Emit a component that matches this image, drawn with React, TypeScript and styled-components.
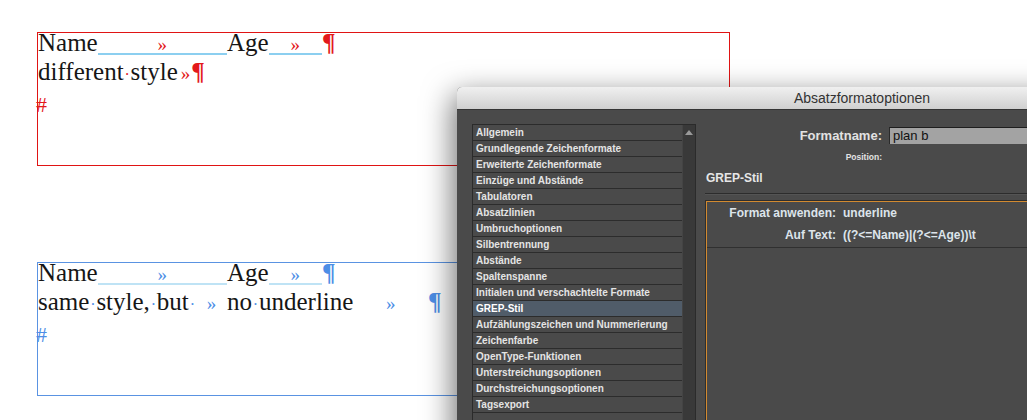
import React from "react";
import styled, { createGlobalStyle } from "styled-components";

const RED = "#e3191b";
const BLUE = "#4d8ee6";

const GlobalStyle = createGlobalStyle`
  html, body {
    margin: 0;
    padding: 0;
    background: #fff;
  }
  body {
    width: 1027px;
    height: 420px;
    overflow: hidden;
  }
`;

const Canvas = styled.main`
  position: relative;
  width: 1027px;
  height: 420px;
  overflow: hidden;
  box-sizing: border-box;
  padding: 32px 0 0 37px;
  display: flex;
  flex-direction: column;
  gap: 96px;
`;

const Frame = styled.section<{ $border: string }>`
  width: 693px;
  height: 134px;
  flex: none;
  box-sizing: border-box;
  border: 1px solid ${(p) => p.$border};
  font-family: "Liberation Serif", "Times New Roman", serif;
  font-size: 25px;
  color: #161616;
`;

const Story = styled.div`
  margin-top: -5px;
`;

const Line = styled.div`
  height: 29px;
  line-height: 29px;
  white-space: nowrap;
`;

const Field = styled.span<{ $w: number }>`
  display: inline-flex;
  align-items: baseline;
  width: ${(p) => p.$w}px;
`;

const TabFill = styled.span<{ $c: string; $line?: string }>`
  flex: 1;
  display: inline-flex;
  justify-content: center;
  font-size: 19px;
  line-height: 17px;
  color: ${(p) => p.$c};
  border-bottom: 2px solid ${(p) => p.$line ?? "transparent"};
`;

const Dot = styled.span<{ $c: string }>`
  display: inline-block;
  width: 7px;
  text-align: center;
  font-size: 16px;
  color: ${(p) => p.$c};
`;

const Raquo = styled.span<{ $c: string }>`
  margin: 0 1px 0 3px;
  font-size: 19px;
  color: ${(p) => p.$c};
`;

const Pilcrow = styled.span<{ $c: string }>`
  font-weight: 700;
  color: ${(p) => p.$c};
`;

const Hash = styled.span<{ $c: string }>`
  position: relative;
  top: 3px;
  margin-left: -2px;
  font-size: 22px;
  color: ${(p) => p.$c};
`;

/* dialog */

const Dialog = styled.div`
  position: absolute;
  left: 457px;
  top: 87px;
  width: 810px;
  height: 420px;
  display: flex;
  flex-direction: column;
  border-radius: 5px 5px 0 0;
  background: #4a4a4a;
  box-shadow: -4px 8px 30px rgba(0, 0, 0, 0.55);
  font-family: "Liberation Sans", Arial, sans-serif;
`;

const TitleBar = styled.header`
  height: 23px;
  flex: none;
  box-sizing: border-box;
  display: flex;
  align-items: center;
  justify-content: center;
  border-radius: 5px 5px 0 0;
  border-bottom: 1px solid #353535;
  background: linear-gradient(#f0f0f0, #d0d0d0);
  color: #333;
  font-size: 14px;
`;

const Body = styled.div`
  flex: 1;
  display: flex;
  padding: 14px 0 0 15px;
`;

const List = styled.div`
  width: 224px;
  height: 320px;
  flex: none;
  box-sizing: border-box;
  display: flex;
  border: 1px solid #2b2b2b;
`;

const Rows = styled.ul`
  flex: 1;
  margin: 0;
  padding: 0;
  list-style: none;
`;

const Row = styled.li<{ $selected?: boolean }>`
  height: 16px;
  box-sizing: border-box;
  padding-left: 3px;
  border-bottom: 1px solid #2c2c2c;
  background: ${(p) => (p.$selected ? "#505c69" : "transparent")};
  color: ${(p) => (p.$selected ? "#fff" : "#e4e4e4")};
  font-size: 10px;
  font-weight: 700;
  line-height: 15px;
  white-space: nowrap;
`;

const Scrollbar = styled.div`
  width: 13px;
  flex: none;
  display: flex;
  justify-content: center;
  padding-top: 5px;
  box-sizing: border-box;
  background: #393939;
  border-left: 1px solid #444;
`;

const Panel = styled.div`
  flex: 1;
  display: flex;
  flex-direction: column;
  padding-left: 10px;
`;

const FormRow = styled.div`
  display: grid;
  grid-template-columns: 176px 300px;
  column-gap: 7px;
  align-items: center;
`;

const NameRow = styled(FormRow)`
  margin-top: 3px;
`;

const Label = styled.span<{ $size: number }>`
  text-align: right;
  color: #e2e2e2;
  font-size: ${(p) => p.$size}px;
  font-weight: 700;
`;

const NameInput = styled.div`
  height: 17px;
  box-sizing: border-box;
  padding-left: 3px;
  border-top: 1px solid #1e1e1e;
  border-left: 1px solid #2a2a2a;
  background: #a3a3a3;
  color: #111;
  font-size: 13px;
  line-height: 16px;
`;

const PositionRow = styled(FormRow)`
  margin-top: 8px;
  height: 10px;
`;

const Heading = styled.h2`
  margin: 9px 0 0;
  color: #e6e6e6;
  font-size: 12px;
  font-weight: 700;
  line-height: 14px;
`;

const Rule = styled.hr`
  margin: 8px 0 0 -1px;
  height: 0;
  border: none;
  border-top: 1px solid #2c2c2c;
  border-bottom: 1px solid #545454;
`;

const StyleBox = styled.div`
  flex: 1;
  margin-top: 6px;
  border: 1px solid #d28a30;
  box-shadow: 0 0 0 1px #2e2e2e;
`;

const StyleRows = styled.div`
  display: grid;
  grid-template-columns: 129px 1fr;
  grid-auto-rows: 22px;
  column-gap: 7px;
  align-items: center;
  border-bottom: 1px solid #303030;
  padding-bottom: 1px;
  color: #dde4ea;
  font-size: 12px;
  font-weight: 700;
`;

const BoxLabel = styled.span`
  text-align: right;
`;

const items = [
  "Allgemein",
  "Grundlegende Zeichenformate",
  "Erweiterte Zeichenformate",
  "Einzüge und Abstände",
  "Tabulatoren",
  "Absatzlinien",
  "Umbruchoptionen",
  "Silbentrennung",
  "Abstände",
  "Spaltenspanne",
  "Initialen und verschachtelte Formate",
  "GREP-Stil",
  "Aufzählungszeichen und Nummerierung",
  "Zeichenfarbe",
  "OpenType-Funktionen",
  "Unterstreichungsoptionen",
  "Durchstreichungsoptionen",
  "Tagsexport",
  "",
];

const HeaderLine = ({ c, line }: { c: string; line: string }) => (
  <Line>
    <Field $w={189}>
      Name
      <TabFill $c={c} $line={line}>»</TabFill>
    </Field>
    <Field $w={95}>
      Age
      <TabFill $c={c} $line={line}>»</TabFill>
    </Field>
    <Pilcrow $c={c}>¶</Pilcrow>
  </Line>
);

export default function App() {
  return (
    <>
      <GlobalStyle />
      <Canvas>
        <Frame $border="#e01414">
          <Story>
            <HeaderLine c={RED} line="#8ccff0" />
            <Line>
              different<Dot $c={RED}>·</Dot>style
              <Raquo $c={RED}>»</Raquo>
              <Pilcrow $c={RED}>¶</Pilcrow>
            </Line>
            <Line>
              <Hash $c={RED}>#</Hash>
            </Line>
          </Story>
        </Frame>

        <Frame $border="#5a93e2">
          <Story>
            <HeaderLine c={BLUE} line="#bfe3f5" />
            <Line>
              <Field $w={189}>
                same<Dot $c={BLUE}>·</Dot>style,<Dot $c={BLUE}>·</Dot>but
                <Dot $c={BLUE}>·</Dot>
                <TabFill $c={BLUE}>»</TabFill>
              </Field>
              <Field $w={201}>
                no<Dot $c={BLUE}>·</Dot>underline
                <TabFill $c={BLUE}>»</TabFill>
              </Field>
              <Pilcrow $c={BLUE}>¶</Pilcrow>
            </Line>
            <Line>
              <Hash $c={BLUE}>#</Hash>
            </Line>
          </Story>
        </Frame>

        <Dialog>
          <TitleBar>Absatzformatoptionen</TitleBar>
          <Body>
            <List>
              <Rows>
                {items.map((item, i) => (
                  <Row key={i} $selected={item === "GREP-Stil"}>
                    {item}
                  </Row>
                ))}
              </Rows>
              <Scrollbar>
                <svg width="8" height="5" viewBox="0 0 8 5">
                  <path d="M0 5 L4 0 L8 5 Z" fill="#9a9a9a" />
                </svg>
              </Scrollbar>
            </List>

            <Panel>
              <NameRow>
                <Label $size={13}>Formatname:</Label>
                <NameInput>plan b</NameInput>
              </NameRow>
              <PositionRow>
                <Label $size={8.5}>Position:</Label>
              </PositionRow>
              <Heading>GREP-Stil</Heading>
              <Rule />
              <StyleBox>
                <StyleRows>
                  <BoxLabel>Format anwenden:</BoxLabel>
                  <span>underline</span>
                  <BoxLabel>Auf Text:</BoxLabel>
                  <span>((?&lt;=Name)|(?&lt;=Age))\t</span>
                </StyleRows>
              </StyleBox>
            </Panel>
          </Body>
        </Dialog>
      </Canvas>
    </>
  );
}
